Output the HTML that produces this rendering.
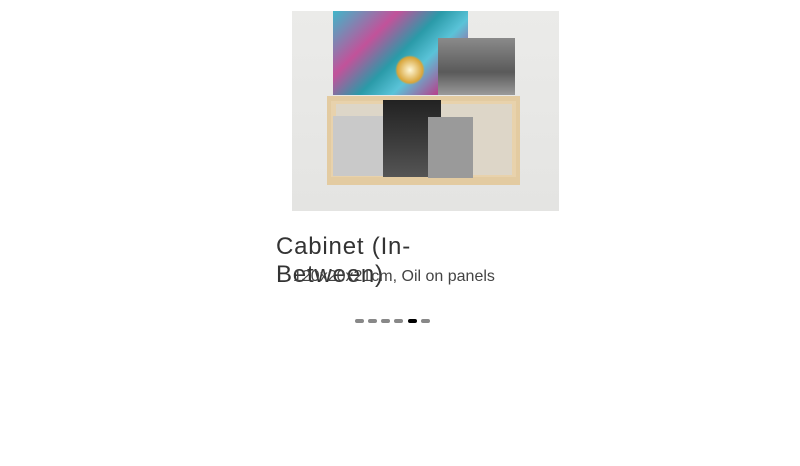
<!DOCTYPE html>
<html><head><style>
body{margin:0;width:800px;height:466px;background:#fff;position:relative;overflow:hidden;font-family:"Liberation Sans",sans-serif}
.a{position:absolute}
.d{position:absolute;top:319px;width:9px;height:4px;border-radius:2px;background:#888}
</style></head><body>
<div class="a" style="left:292px;top:11px;width:267px;height:200px;background:linear-gradient(#ebebe9,#e4e4e2)"></div>
<div class="a" style="left:333px;top:11px;width:135px;height:84px;background:linear-gradient(135deg,#3fb6c9 0%,#c2529a 30%,#2a9aa8 50%,#5ac3d8 65%,#b3468f 85%,#38a0b4 100%)"></div>
<div class="a" style="left:395px;top:55px;width:30px;height:30px;border-radius:50%;background:radial-gradient(#fff8d8,#d8a53a 60%,transparent 70%)"></div>
<div class="a" style="left:438px;top:38px;width:77px;height:57px;background:linear-gradient(#8a8a8a,#5a5a5a 60%,#9a9a9a)"></div>
<div class="a" style="left:327px;top:96px;width:193px;height:89px;background:#e8d2ac;box-sizing:border-box;border:4px solid #e3cba1;border-top-width:5px;border-bottom-width:8px"></div>
<div class="a" style="left:336px;top:104px;width:176px;height:71px;background:#ddd6c8"></div>
<div class="a" style="left:333px;top:116px;width:50px;height:60px;background:#c9c9c9"></div>
<div class="a" style="left:383px;top:100px;width:58px;height:77px;background:linear-gradient(#222,#3a3a3a 50%,#555)"></div>
<div class="a" style="left:428px;top:117px;width:45px;height:61px;background:#9a9a9a"></div>
<div class="a" style="left:276px;top:233px;font-size:24px;line-height:28px;letter-spacing:0.8px;color:#333;width:180px">Cabinet (In-<br>Between)</div>
<div class="a" style="left:293px;top:268px;font-size:16px;color:#444">120x20x21cm, Oil on panels</div>
<div class="d" style="left:355px"></div><div class="d" style="left:368px"></div><div class="d" style="left:381px"></div><div class="d" style="left:394px"></div><div class="d" style="left:408px;background:#000"></div><div class="d" style="left:421px"></div>
</body></html>
